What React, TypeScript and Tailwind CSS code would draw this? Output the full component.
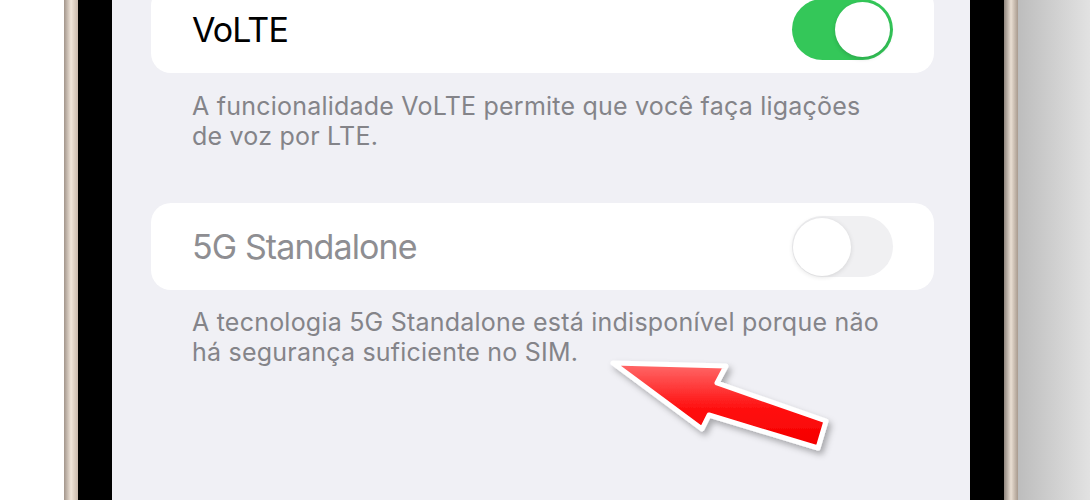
import React from "react";

const font = { fontFamily: "Inter, 'Open Sans', sans-serif" };

function Toggle({ on }: { on: boolean }) {
  if (on) {
    return (
      <div className="flex h-[61px] w-[101px] items-center justify-end rounded-full bg-[#34c759] px-[3px]">
        <div className="h-[55px] w-[55px] rounded-full bg-white shadow-[0_2px_4px_rgba(0,0,0,0.15)]" />
      </div>
    );
  }
  return (
    <div className="flex h-[61px] w-[101px] items-center justify-start rounded-full bg-[#f0f0f2] px-[1px]">
      <div className="h-[58px] w-[58px] rounded-full bg-white shadow-[0_1px_5px_rgba(0,0,0,0.12)]" />
    </div>
  );
}

function Arrow() {
  return (
    <svg
      className="pointer-events-none absolute left-0 top-0"
      width="1090"
      height="500"
      viewBox="0 0 1090 500"
    >
      <defs>
        <linearGradient id="red" x1="0" y1="0" x2="0" y2="1">
          <stop offset="0" stopColor="#ff6b6b" />
          <stop offset="0.55" stopColor="#ff0d0d" />
          <stop offset="1" stopColor="#f40000" />
        </linearGradient>
        <filter id="shadow" x="-20%" y="-20%" width="140%" height="140%">
          <feDropShadow dx="3" dy="4" stdDeviation="3" floodColor="#000" floodOpacity="0.3" />
        </filter>
      </defs>
      <polygon
        points="613,363 726,366 717,383 826,421 818,448 709,415 702,429"
        fill="url(#red)"
        stroke="#ffffff"
        strokeWidth="5"
        strokeLinejoin="round"
        filter="url(#shadow)"
      />
    </svg>
  );
}

export default function App() {
  return (
    <div className="relative flex h-[500px] w-[1090px] overflow-hidden bg-white" style={font}>
      <div className="w-[64px] shrink-0 bg-white" />
      <div className="w-[14px] shrink-0 bg-gradient-to-r from-[#a3968c] via-[#f1e6da] to-[#c9b9ab]" />
      <div className="w-[34px] shrink-0 bg-black" />

      <main className="w-[858px] shrink-0 bg-[#f0f0f5] pl-[39px] pr-[36px]">
        <div className="-mt-[14px] flex h-[87px] items-center justify-between rounded-[20px] bg-white px-[41px]">
          <span className="text-[34px] tracking-[-0.9px] text-black">VoLTE</span>
          <Toggle on />
        </div>
        <p className="mt-[18px] pl-[41px] text-[25px] leading-[30px] tracking-[0.22px] text-[#848489]">
          A funcionalidade VoLTE permite que você faça ligações
          <br />
          de voz por LTE.
        </p>

        <div className="mt-[52px] flex h-[87px] items-center justify-between rounded-[20px] bg-white px-[41px]">
          <span className="text-[34px] tracking-[-0.9px] text-[#8e8e92]">5G Standalone</span>
          <Toggle on={false} />
        </div>
        <p className="mt-[17px] pl-[41px] text-[25px] leading-[30px] tracking-[0.22px] text-[#848489]">
          A tecnologia 5G Standalone está indisponível porque não
          <br />
          há segurança suficiente no SIM.
        </p>
      </main>

      <div className="w-[34px] shrink-0 bg-black" />
      <div className="w-[14px] shrink-0 bg-gradient-to-r from-[#8f857d] via-[#eadfd3] to-[#a89a8e]" />
      <div className="flex-1 bg-gradient-to-r from-[#bdbdbd] to-[#e2e2e2]" />

      <Arrow />
    </div>
  );
}
